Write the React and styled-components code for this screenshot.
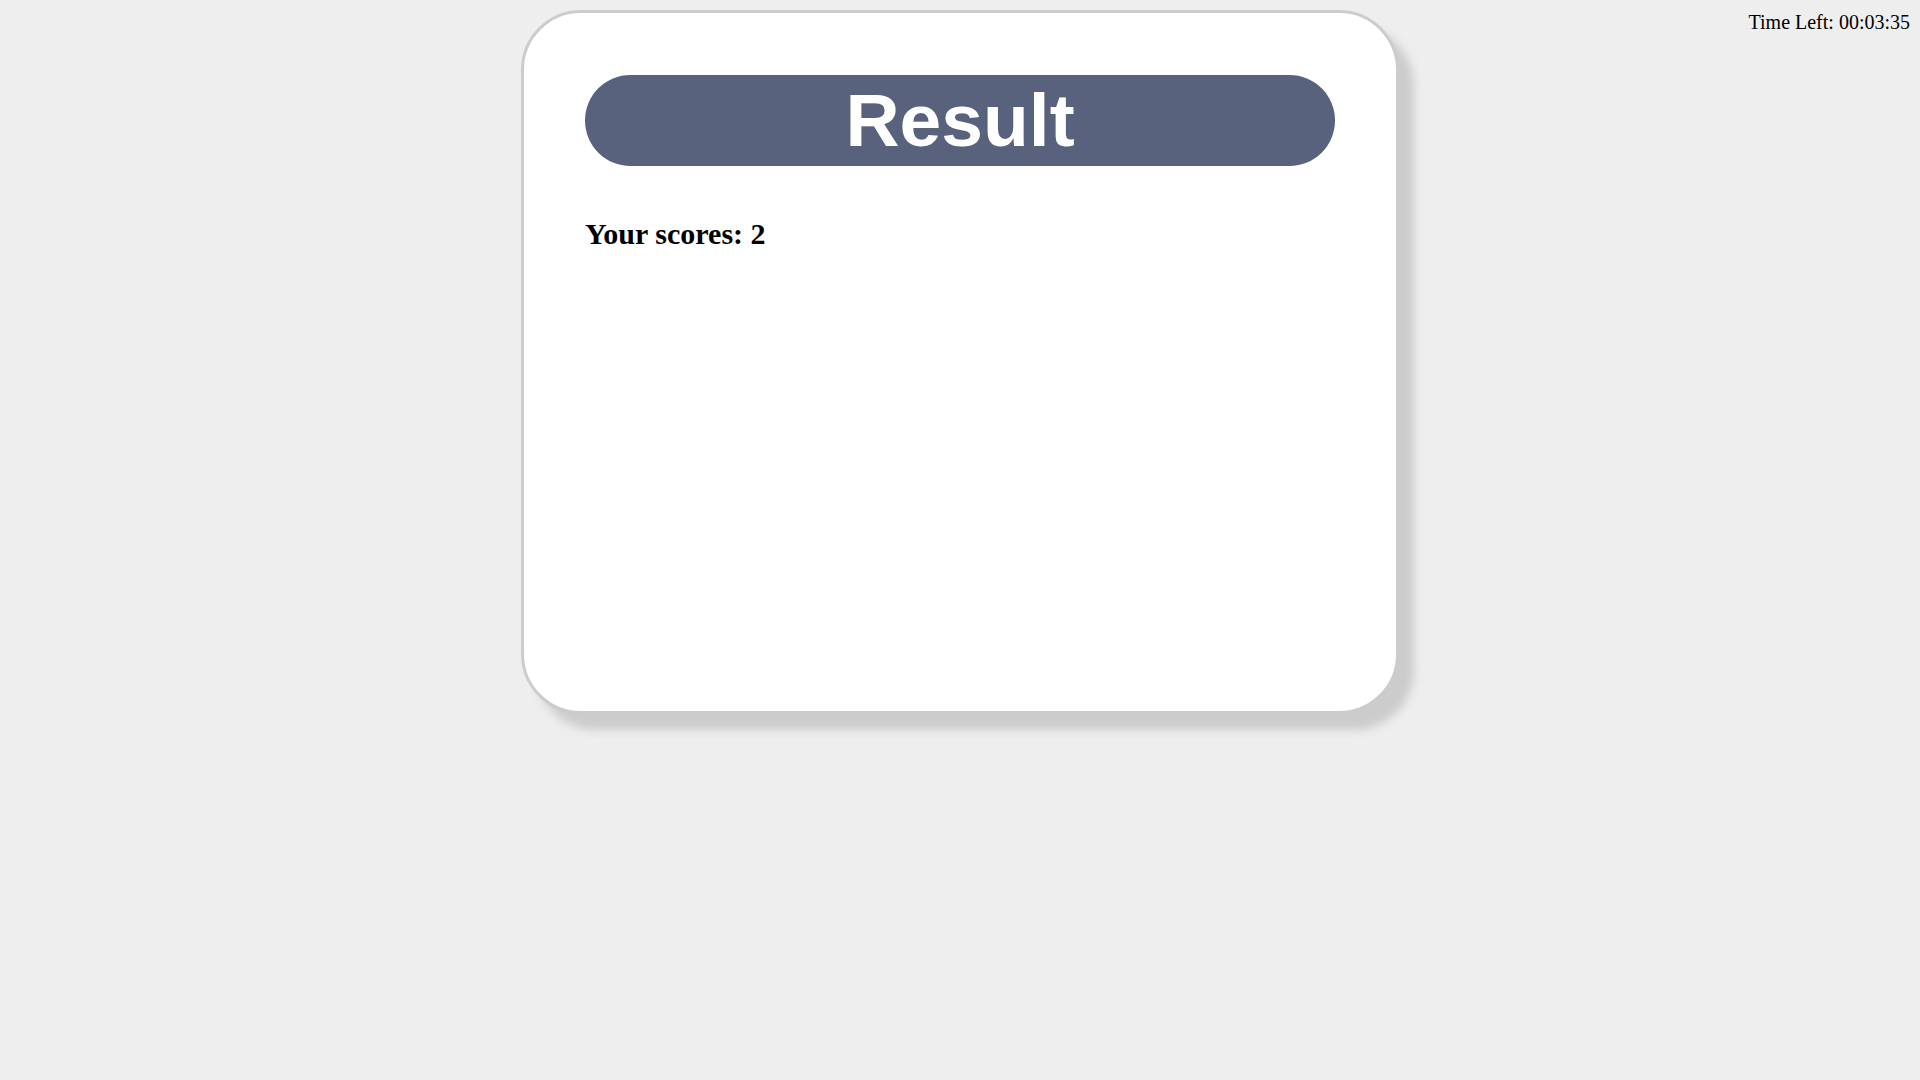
import React from 'react';
import styled, { createGlobalStyle } from 'styled-components';

const GlobalStyle = createGlobalStyle`
    body {
        margin: 8px;
        background-color: #eeeeee;
        font-family: "Liberation Serif", "Times New Roman", serif;
    }
`;

const Page = styled.div`
    display: grid;
    grid-template-columns: 1fr auto 1fr;
    align-items: start;
    padding-top: 2px;
    padding-bottom: 40px;
`;

const Card = styled.section`
    grid-column: 2;
    width: 750px;
    height: 572px;
    padding: 62px 61px 64px;
    background-color: #ffffff;
    border: 3px solid #cccccc;
    border-radius: 60px;
    box-shadow: 15px 16px 10px 0 #cccccc;
`;

const Banner = styled.h1`
    margin: 0;
    height: 91px;
    line-height: 91px;
    border-radius: 46px;
    background-color: #58627d;
    color: #ffffff;
    text-align: center;
    font-family: "Liberation Sans", Arial, sans-serif;
    font-weight: bold;
    font-size: 75px;
`;

const Score = styled.h2`
    margin: 51px 0 0 0;
    font-size: 30px;
    font-weight: bold;
    color: #000000;
`;

const Timer = styled.div`
    grid-column: 3;
    justify-self: end;
    padding: 1px 2px 0 0;
    font-size: 20px;
    color: #000000;
`;

class App extends React.Component {
    render() {
        const score = 2;
        return (
            <Page>
                <GlobalStyle />
                <Card>
                    <Banner>Result</Banner>
                    <Score>Your scores: {score}</Score>
                </Card>
                <Timer>Time Left: 00:03:35</Timer>
            </Page>
        );
    }
}

export default App;
